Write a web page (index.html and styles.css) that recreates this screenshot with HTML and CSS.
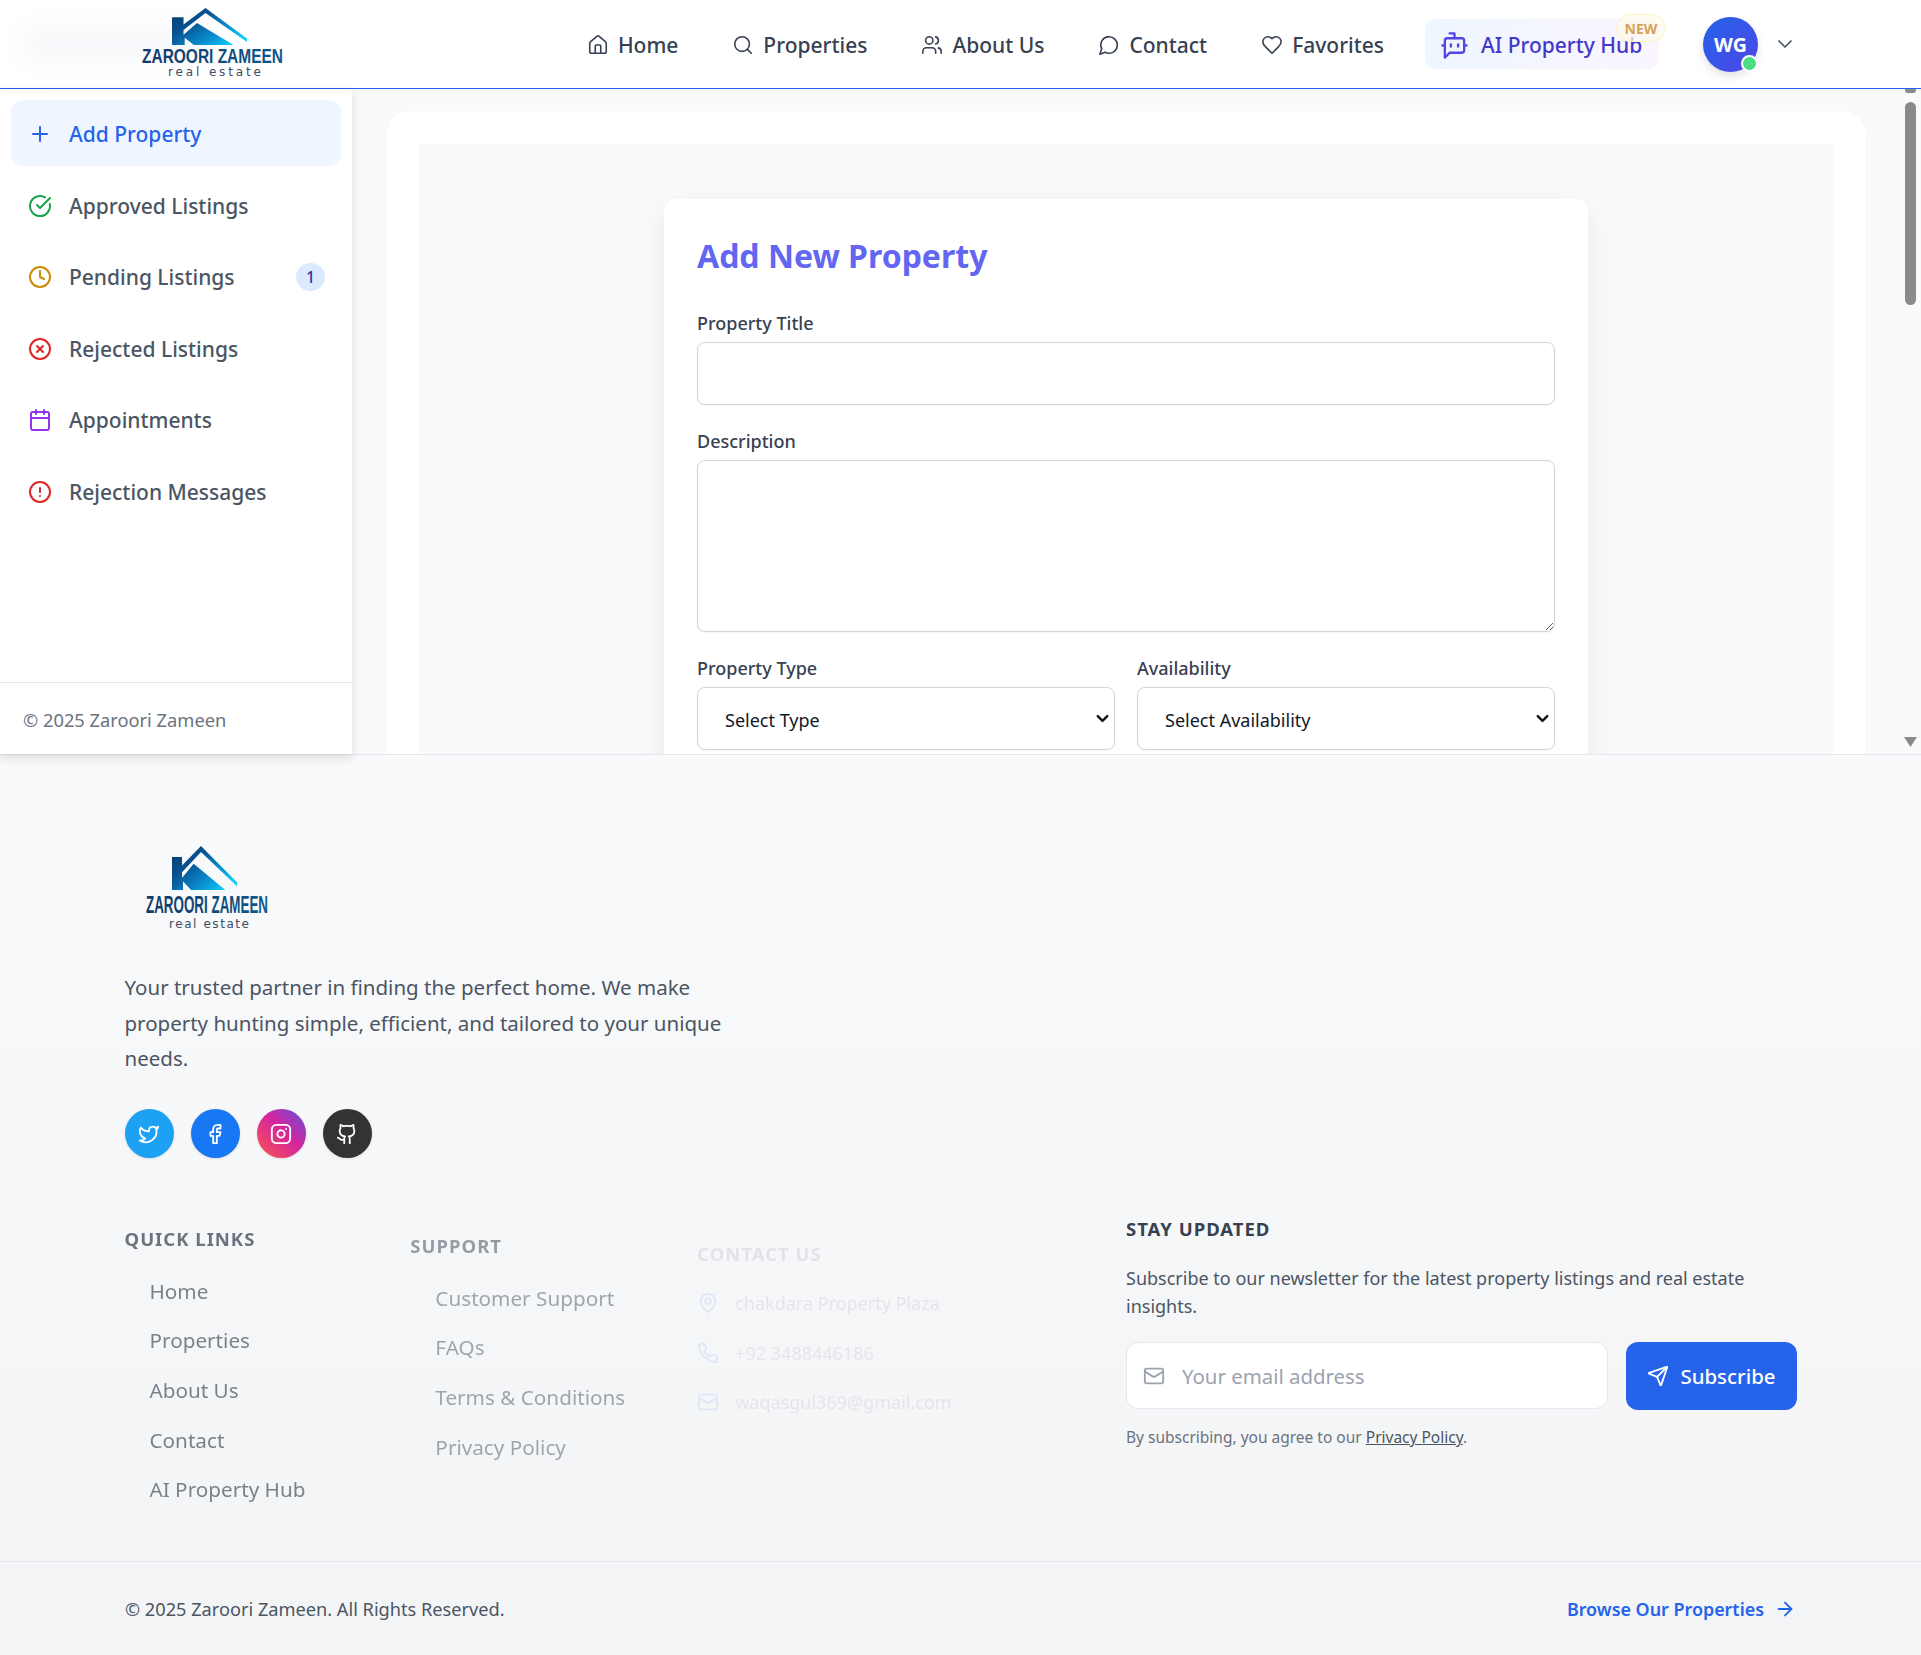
FILE: index.html
```html
<!DOCTYPE html>
<html lang="en">
<head>
<meta charset="utf-8">
<title>Add New Property - Zaroori Zameen</title>
<link rel="stylesheet" href="styles.css">
</head>
<body>
<svg class="sprite" aria-hidden="true">
  <defs>
    <linearGradient id="logoGrad" x1="0" y1="0" x2="1" y2="0.75">
      <stop offset="0" stop-color="#0a3768"/>
      <stop offset="0.35" stop-color="#07508f"/>
      <stop offset="0.72" stop-color="#0a8fd0"/>
      <stop offset="1" stop-color="#12d0fa"/>
    </linearGradient>
    <linearGradient id="logoText" x1="0" y1="0" x2="1" y2="0">
      <stop offset="0" stop-color="#123a68"/>
      <stop offset="1" stop-color="#0d5a8c"/>
    </linearGradient>
  </defs>
  <symbol id="i-logo-mark" viewBox="0 0 195 131" preserveAspectRatio="none">
    <path fill="url(#logoGrad)" d="M0 33H30V58L87 0L195 108V120L87 18L30 78V95L65 53L160 131H57L33 105V131H0Z"/>
  </symbol>
  <symbol id="i-home" viewBox="0 0 24 24"><path d="M15 21v-8a1 1 0 0 0-1-1h-4a1 1 0 0 0-1 1v8"/><path d="M3 10a2 2 0 0 1 .709-1.528l7-5.999a2 2 0 0 1 2.582 0l7 5.999A2 2 0 0 1 21 10v9a2 2 0 0 1-2 2H5a2 2 0 0 1-2-2z"/></symbol>
  <symbol id="i-search" viewBox="0 0 24 24"><circle cx="11" cy="11" r="8"/><path d="m21 21-4.3-4.3"/></symbol>
  <symbol id="i-users" viewBox="0 0 24 24"><path d="M16 21v-2a4 4 0 0 0-4-4H6a4 4 0 0 0-4 4v2"/><circle cx="9" cy="7" r="4"/><path d="M22 21v-2a4 4 0 0 0-3-3.87"/><path d="M16 3.13a4 4 0 0 1 0 7.75"/></symbol>
  <symbol id="i-message" viewBox="0 0 24 24"><path d="M7.9 20A9 9 0 1 0 4 16.1L2 22Z"/></symbol>
  <symbol id="i-heart" viewBox="0 0 24 24"><path d="M19 14c1.49-1.46 3-3.21 3-5.5A5.5 5.5 0 0 0 16.5 3c-1.76 0-3 .5-4.5 2-1.5-1.5-2.74-2-4.5-2A5.5 5.5 0 0 0 2 8.5c0 2.3 1.5 4.05 3 5.5l7 7Z"/></symbol>
  <symbol id="i-bot" viewBox="0 0 24 24"><path d="M12 6V2H8"/><path d="m8 18-4 4V8a2 2 0 0 1 2-2h12a2 2 0 0 1 2 2v8a2 2 0 0 1-2 2Z"/><path d="M2 12h2"/><path d="M9 11v2"/><path d="M15 11v2"/><path d="M20 12h2"/></symbol>
  <symbol id="i-chevron" viewBox="0 0 24 24"><path d="m6 9 6 6 6-6"/></symbol>
  <symbol id="i-plus" viewBox="0 0 24 24"><path d="M5 12h14"/><path d="M12 5v14"/></symbol>
  <symbol id="i-check" viewBox="0 0 24 24"><path d="M21.801 10A10 10 0 1 1 17 3.335"/><path d="m9 11 3 3L22 4"/></symbol>
  <symbol id="i-clock" viewBox="0 0 24 24"><circle cx="12" cy="12" r="10"/><path d="M12 6v6l4 2"/></symbol>
  <symbol id="i-xcircle" viewBox="0 0 24 24"><circle cx="12" cy="12" r="10"/><path d="m15 9-6 6"/><path d="m9 9 6 6"/></symbol>
  <symbol id="i-calendar" viewBox="0 0 24 24"><path d="M8 2v4"/><path d="M16 2v4"/><rect x="3" y="4" width="18" height="18" rx="2"/><path d="M3 10h18"/></symbol>
  <symbol id="i-alert" viewBox="0 0 24 24"><circle cx="12" cy="12" r="10"/><path d="M12 8v4"/><path d="M12 16h.01"/></symbol>
  <symbol id="i-twitter" viewBox="0 0 24 24"><path d="M22 4s-.7 2.1-2 3.4c1.6 10-9.4 17.3-18 11.6 2.2.1 4.4-.6 6-2C3 15.5.5 9.6 3 5c2.2 2.6 5.6 4.1 9 4-.9-4.2 4-6.6 7-3.8 1.1 0 3-1.2 3-1.2z"/></symbol>
  <symbol id="i-facebook" viewBox="0 0 24 24"><path d="M18 2h-3a5 5 0 0 0-5 5v3H7v4h3v8h4v-8h3l1-4h-4V7a1 1 0 0 1 1-1h3z"/></symbol>
  <symbol id="i-instagram" viewBox="0 0 24 24"><rect x="2" y="2" width="20" height="20" rx="5"/><path d="M16 11.37A4 4 0 1 1 12.63 8 4 4 0 0 1 16 11.37z"/><path d="M17.5 6.5h.01"/></symbol>
  <symbol id="i-github" viewBox="0 0 24 24"><path d="M15 22v-4a4.8 4.8 0 0 0-1-3.5c3 0 6-2 6-5.5.08-1.25-.27-2.48-1-3.5.28-1.15.28-2.35 0-3.5 0 0-1 0-3 1.5-2.64-.5-5.36-.5-8 0C6 2 5 2 5 2c-.3 1.15-.3 2.35 0 3.5A5.403 5.403 0 0 0 4 9c0 3.5 3 5.5 6 5.5-.39.49-.68 1.05-.85 1.65-.17.6-.22 1.23-.15 1.85v4"/><path d="M9 18c-4.51 2-5-2-7-2"/></symbol>
  <symbol id="i-pin" viewBox="0 0 24 24"><path d="M20 10c0 6-8 12-8 12s-8-6-8-12a8 8 0 0 1 16 0Z"/><circle cx="12" cy="10" r="3"/></symbol>
  <symbol id="i-phone" viewBox="0 0 24 24"><path d="M22 16.92v3a2 2 0 0 1-2.18 2 19.79 19.79 0 0 1-8.63-3.07 19.5 19.5 0 0 1-6-6 19.79 19.79 0 0 1-3.07-8.67A2 2 0 0 1 4.11 2h3a2 2 0 0 1 2 1.72 12.84 12.84 0 0 0 .7 2.81 2 2 0 0 1-.45 2.11L8.09 9.91a16 16 0 0 0 6 6l1.27-1.27a2 2 0 0 1 2.11-.45 12.84 12.84 0 0 0 2.81.7A2 2 0 0 1 22 16.92z"/></symbol>
  <symbol id="i-mail" viewBox="0 0 24 24"><rect x="2" y="4" width="20" height="16" rx="2"/><path d="m22 7-8.97 5.7a1.94 1.94 0 0 1-2.06 0L2 7"/></symbol>
  <symbol id="i-send" viewBox="0 0 24 24"><path d="M14.536 21.686a.5.5 0 0 0 .937-.024l6.5-19a.496.496 0 0 0-.635-.635l-19 6.5a.5.5 0 0 0-.024.937l7.93 3.18a2 2 0 0 1 1.112 1.11z"/><path d="m21.854 2.147-10.94 10.939"/></symbol>
  <symbol id="i-arrow" viewBox="0 0 24 24"><path d="M5 12h14"/><path d="m12 5 7 7-7 7"/></symbol>
</svg>

<header class="topbar">
  <a class="brand" href="#">
    <svg class="brand-mark"><use href="#i-logo-mark"/></svg>
    <svg class="brand-text" viewBox="0 0 142 30"><text class="logo-name" x="0" y="15" textLength="141" lengthAdjust="spacingAndGlyphs">ZAROORI ZAMEEN</text><text class="logo-sub" x="26" y="28" textLength="93" lengthAdjust="spacing">real estate</text></svg>
  </a>
  <nav class="nav">
    <a class="nav-link" href="#"><svg class="icon icon-nav"><use href="#i-home"/></svg>Home</a>
    <a class="nav-link" href="#"><svg class="icon icon-nav"><use href="#i-search"/></svg>Properties</a>
    <a class="nav-link" href="#"><svg class="icon icon-nav"><use href="#i-users"/></svg>About Us</a>
    <a class="nav-link" href="#"><svg class="icon icon-nav"><use href="#i-message"/></svg>Contact</a>
    <a class="nav-link" href="#"><svg class="icon icon-nav"><use href="#i-heart"/></svg>Favorites</a>
    <a class="hub" href="#"><svg class="icon icon-hub"><use href="#i-bot"/></svg><span class="hub-text">AI Property Hub</span><span class="hub-new">NEW</span></a>
    <div class="account">
      <div class="avatar">WG<span class="avatar-dot"></span></div>
      <svg class="icon icon-chevron"><use href="#i-chevron"/></svg>
    </div>
  </nav>
</header>

<div class="workspace">
  <aside class="sidebar">
    <ul class="side-list">
      <li><a class="side-item active" href="#"><svg class="icon icon-side"><use href="#i-plus"/></svg>Add Property</a></li>
      <li><a class="side-item" href="#"><svg class="icon icon-side green"><use href="#i-check"/></svg>Approved Listings</a></li>
      <li><a class="side-item" href="#"><svg class="icon icon-side amber"><use href="#i-clock"/></svg>Pending Listings<span class="side-badge">1</span></a></li>
      <li><a class="side-item" href="#"><svg class="icon icon-side red"><use href="#i-xcircle"/></svg>Rejected Listings</a></li>
      <li><a class="side-item" href="#"><svg class="icon icon-side purple"><use href="#i-calendar"/></svg>Appointments</a></li>
      <li><a class="side-item" href="#"><svg class="icon icon-side red"><use href="#i-alert"/></svg>Rejection Messages</a></li>
    </ul>
    <div class="side-foot">© 2025 Zaroori Zameen</div>
  </aside>
  <main class="main">
    <div class="panel">
      <div class="panel-inner">
        <form class="form-card">
          <h1 class="form-title">Add New Property</h1>
          <div class="field">
            <label class="label" for="title">Property Title</label>
            <input class="control" id="title" type="text">
          </div>
          <div class="field">
            <label class="label" for="desc">Description</label>
            <textarea class="control area" id="desc"></textarea>
          </div>
          <div class="field-row">
            <div class="field">
              <label class="label" for="type">Property Type</label>
              <div class="select-wrap">
                <select class="control select" id="type"><option>Select Type</option></select>
                <svg class="icon icon-select"><use href="#i-chevron"/></svg>
              </div>
            </div>
            <div class="field">
              <label class="label" for="avail">Availability</label>
              <div class="select-wrap">
                <select class="control select" id="avail"><option>Select Availability</option></select>
                <svg class="icon icon-select"><use href="#i-chevron"/></svg>
              </div>
            </div>
          </div>
        </form>
      </div>
    </div>
    <div class="scrollbar">
      <span class="scroll-up"></span>
      <span class="scroll-thumb"></span>
      <span class="scroll-down"></span>
    </div>
  </main>
</div>

<footer class="footer">
  <div class="foot-inner">
    <div class="foot-about">
      <div class="foot-logo">
        <svg class="foot-mark"><use href="#i-logo-mark"/></svg>
        <svg class="foot-text" viewBox="0 0 122 34"><text class="logo-name foot-name" x="0" y="18" textLength="122" lengthAdjust="spacingAndGlyphs">ZAROORI ZAMEEN</text><text class="logo-sub" x="23" y="33" textLength="80" lengthAdjust="spacing">real estate</text></svg>
      </div>
      <p class="foot-desc">Your trusted partner in finding the perfect home. We make property hunting simple, efficient, and tailored to your unique needs.</p>
      <div class="socials">
        <a class="social tw" href="#"><svg class="icon icon-social"><use href="#i-twitter"/></svg></a>
        <a class="social fb" href="#"><svg class="icon icon-social"><use href="#i-facebook"/></svg></a>
        <a class="social ig" href="#"><svg class="icon icon-social"><use href="#i-instagram"/></svg></a>
        <a class="social gh" href="#"><svg class="icon icon-social"><use href="#i-github"/></svg></a>
      </div>
    </div>
    <div class="foot-cols">
      <section class="col col-links">
        <h3 class="col-title">Quick Links</h3>
        <ul class="link-list">
          <li><a href="#">Home</a></li>
          <li><a href="#">Properties</a></li>
          <li><a href="#">About Us</a></li>
          <li><a href="#">Contact</a></li>
          <li><a href="#">AI Property Hub</a></li>
        </ul>
      </section>
      <section class="col col-support">
        <h3 class="col-title">Support</h3>
        <ul class="link-list">
          <li><a href="#">Customer Support</a></li>
          <li><a href="#">FAQs</a></li>
          <li><a href="#">Terms &amp; Conditions</a></li>
          <li><a href="#">Privacy Policy</a></li>
        </ul>
      </section>
      <section class="col col-contact">
        <h3 class="col-title">Contact Us</h3>
        <ul class="contact-list">
          <li><svg class="icon icon-contact"><use href="#i-pin"/></svg>chakdara Property Plaza</li>
          <li><svg class="icon icon-contact"><use href="#i-phone"/></svg>+92 3488446186</li>
          <li><svg class="icon icon-contact"><use href="#i-mail"/></svg>waqasgul369@gmail.com</li>
        </ul>
      </section>
      <section class="col col-news">
        <h3 class="col-title">Stay Updated</h3>
        <p class="news-text">Subscribe to our newsletter for the latest property listings and real estate insights.</p>
        <div class="news-form">
          <label class="news-input"><svg class="icon icon-mail"><use href="#i-mail"/></svg><input class="news-field" type="email" placeholder="Your email address"></label>
          <button class="news-btn" type="button"><svg class="icon icon-send"><use href="#i-send"/></svg>Subscribe</button>
        </div>
        <p class="news-note">By subscribing, you agree to our <a href="#">Privacy Policy</a>.</p>
      </section>
    </div>
  </div>
  <div class="foot-bottom">
    <span>© 2025 Zaroori Zameen. All Rights Reserved.</span>
    <a class="browse" href="#">Browse Our Properties<svg class="icon icon-arrow"><use href="#i-arrow"/></svg></a>
  </div>
</footer>
</body>
</html>
```

FILE: styles.css
```css
* { box-sizing: border-box; }
html, body { margin: 0; padding: 0; }
body {
  width: 1921px;
  height: 1655px;
  overflow: hidden;
  font-family: "Noto Sans", "Open Sans", Arial, sans-serif;
  color: #374151;
  background: #f9fafb;
}
a { color: inherit; text-decoration: none; }
ul { list-style: none; margin: 0; padding: 0; }
.sprite { position: absolute; width: 0; height: 0; }
.icon {
  flex: none;
  fill: none;
  stroke: currentColor;
  stroke-width: 2;
  stroke-linecap: round;
  stroke-linejoin: round;
}

/* Top bar */
.topbar {
  height: 89px;
  background: #fff;
  border-bottom: 1px solid #2563eb;
  display: flex;
  align-items: flex-start;
  justify-content: space-between;
  padding: 0 124px 0 142px;
  position: relative;
}
.topbar::before {
  content: "";
  position: absolute;
  left: 24px;
  top: 30px;
  width: 180px;
  height: 28px;
  background: #eef0f6;
  filter: blur(14px);
  opacity: .6;
}
.brand { width: 142px; height: 88px; position: relative; display: block; }
.brand-mark { position: absolute; left: 30px; top: 8px; width: 75px; height: 37px; }
.brand-text { position: absolute; left: 0; top: 48px; width: 142px; height: 30px; overflow: visible; }
.logo-name {
  font-family: "Liberation Sans", Arial, sans-serif;
  font-weight: 700;
  font-size: 19.5px;
  fill: url(#logoText);
}
.foot-name { font-size: 23.7px; }
.logo-sub {
  font-family: "DejaVu Sans", sans-serif;
  font-size: 12px;
  fill: #3f4d63;
}
.nav { display: flex; align-items: center; height: 88px; }
.nav-link {
  display: flex;
  align-items: center;
  gap: 9px;
  margin-right: 54px;
  padding-top: 2px;
  font-size: 21px;
  font-weight: 500;
  color: #374151;
}
.icon-nav { width: 22px; height: 22px; stroke-width: 1.75; }
.hub {
  position: relative;
  width: 234px;
  height: 50px;
  margin-left: -13px;
  margin-right: 44px;
  padding: 2px 0 0 15px;
  display: flex;
  align-items: center;
  gap: 12px;
  border-radius: 10px;
  background: linear-gradient(90deg, #eff6ff, #faf5ff);
  font-size: 21px;
  font-weight: 500;
}
.hub-text { color: #4338ca; }
.icon-hub { width: 29px; height: 29px; color: #4f46e5; stroke-width: 1.9; }
.hub-new {
  position: absolute;
  right: -7px;
  top: -5px;
  width: 50px;
  height: 28px;
  border-radius: 14px;
  border: 1px solid #fef3c7;
  background: rgba(254, 249, 235, .75);
  color: #d6a15a;
  font-size: 14px;
  font-weight: 700;
  display: flex;
  align-items: center;
  justify-content: center;
}
.account { display: flex; align-items: center; gap: 15px; }
.avatar {
  position: relative;
  width: 55px;
  height: 55px;
  border-radius: 50%;
  background: linear-gradient(135deg, #2563eb, #4f46e5);
  color: #fff;
  font-size: 19.5px;
  font-weight: 700;
  display: flex;
  align-items: center;
  justify-content: center;
  box-shadow: 0 4px 8px rgba(0, 0, 0, .12);
}
.avatar-dot {
  position: absolute;
  right: 0;
  bottom: 0;
  width: 17px;
  height: 17px;
  border-radius: 50%;
  background: #4ade80;
  border: 2px solid #fff;
}
.icon-chevron { width: 24px; height: 24px; color: #4b5563; stroke-width: 1.75; }

/* Workspace */
.workspace { display: flex; height: 665px; }
.sidebar {
  width: 352px;
  flex: none;
  height: 665px;
  background: #fff;
  display: flex;
  flex-direction: column;
  justify-content: space-between;
  box-shadow: 0 4px 10px rgba(0, 0, 0, .12);
  position: relative;
  z-index: 1;
  padding-top: 11px;
}
.side-list { display: flex; flex-direction: column; gap: 5.5px; padding: 0 11px; }
.side-item {
  height: 66px;
  display: flex;
  align-items: center;
  gap: 17px;
  padding: 2px 16px 0 17px;
  border-radius: 12px;
  font-size: 21px;
  font-weight: 500;
  color: #4b5563;
}
.side-item.active { background: #eff6ff; color: #2563eb; }
.icon-side { width: 24px; height: 24px; }
.green { color: #16a34a; }
.amber { color: #ca8a04; }
.red { color: #dc2626; }
.purple { color: #9333ea; }
.side-badge {
  margin-left: auto;
  width: 29px;
  height: 28px;
  border-radius: 50%;
  background: #dbeafe;
  color: #3730a3;
  font-size: 16px;
  display: flex;
  align-items: center;
  justify-content: center;
}
.side-foot {
  height: 72px;
  border-top: 1px solid #e5e7eb;
  padding: 2px 23px 0;
  display: flex;
  align-items: center;
  font-size: 18.3px;
  color: #6b7280;
}
.main { flex: 1; display: flex; min-width: 0; height: 665px; background: #f9fafb; position: relative; overflow: hidden; }
.panel {
  width: 1480px;
  margin: 22px 0 0 34px;
  padding: 33px 33px 0;
  background: #fff;
  border-radius: 24px 24px 0 0;
  box-shadow: 0 1px 3px rgba(0, 0, 0, .04);
  height: 700px;
}
.panel-inner { background: #f9fafb; padding: 55px 245px 0; height: 100%; }
.form-card {
  background: #fff;
  border-radius: 12px;
  box-shadow: 0 10px 30px rgba(0, 0, 0, .08);
  padding: 33px 33px 60px;
  width: 924px;
}
.form-title { margin: 0 0 29px; font-size: 32px; font-weight: 700; line-height: 48px; color: #6366f1; }
.field { margin-bottom: 22px; display: flex; flex-direction: column; flex: 1; min-width: 0; }
.label { font-size: 18px; font-weight: 500; color: #374151; line-height: 28px; margin-bottom: 5px; }
.control {
  width: 100%;
  height: 63px;
  border: 1px solid #d1d5db;
  border-radius: 8px;
  background: #fff;
  font-family: inherit;
  font-size: 18px;
  color: #111827;
  box-shadow: 0 1px 2px rgba(0, 0, 0, .04);
}
.area { height: 172px; display: block; resize: vertical; }
.select-wrap { position: relative; }
.select { appearance: none; -webkit-appearance: none; padding: 2px 0 0 27px; display: block; }
.icon-select {
  position: absolute;
  right: 3px;
  top: 22px;
  width: 19px;
  height: 19px;
  color: #111;
  stroke-width: 3;
  pointer-events: none;
}
.field-row { display: flex; gap: 22px; }

.scrollbar {
  position: absolute;
  right: 5px;
  top: 0;
  width: 11px;
  height: 100%;
}
.scroll-up {
  position: absolute;
  left: 0;
  top: -1px;
  width: 11px;
  height: 5px;
  background: #8a8a8a;
  border-radius: 0 0 3px 3px;
}
.scroll-thumb {
  position: absolute;
  left: 0;
  top: 13px;
  width: 11px;
  height: 203px;
  background: #8a8a8a;
  border-radius: 6px;
}
.scroll-down {
  position: absolute;
  left: -1px;
  top: 648px;
  width: 13px;
  height: 10px;
  background: #8a8a8a;
  clip-path: polygon(0 0, 100% 0, 50% 100%);
}

/* Footer */
.footer {
  height: 901px;
  border-top: 1px solid #e5e7eb;
  background: linear-gradient(180deg, #f9fafb, #f3f4f6);
  display: flex;
  flex-direction: column;
}
.foot-inner { height: 806px; padding: 91px 124px 0 124.5px; flex: none; }
.foot-about { width: 620px; }
.foot-logo { position: relative; width: 200px; height: 87px; margin-left: 21px; }
.foot-mark { position: absolute; left: 26px; top: 0; width: 65px; height: 44px; }
.foot-text { position: absolute; left: 0; top: 49px; width: 122px; height: 34px; overflow: visible; }
.foot-desc { margin: 37px 0 0; font-size: 20.5px; line-height: 35.6px; color: #4b5563; }
.socials { display: flex; gap: 16.5px; margin-top: 32px; }
.social {
  width: 49.5px;
  height: 49.5px;
  border-radius: 50%;
  display: flex;
  align-items: center;
  justify-content: center;
  color: #fff;
  box-shadow: 0 1px 3px rgba(0, 0, 0, .1);
}
.icon-social { width: 22px; height: 22px; }
.tw { background: #1da1f2; }
.fb { background: #1877f2; }
.ig { background: linear-gradient(45deg, #f9584a, #d6249f 55%, #5b51d8); }
.gh { background: #333; }
.foot-cols { display: flex; margin-top: 46px; }
.col-title {
  margin: 0;
  font-size: 18.5px;
  font-weight: 700;
  letter-spacing: 1px;
  text-transform: uppercase;
  line-height: 28px;
  color: #374151;
}
.col-links { width: 286px; opacity: .72; padding-top: 21px; }
.col-support { width: 287px; opacity: .5; padding-top: 28px; }
.col-contact { width: 429px; opacity: .1; padding-top: 36px; }
.col-news { flex: 1; padding-top: 11px; }
.link-list { margin-top: 22.5px; padding-left: 25px; display: flex; flex-direction: column; gap: 19.6px; }
.link-list a { font-size: 20.7px; line-height: 30px; color: #4b5563; display: block; }
.contact-list { margin-top: 20px; display: flex; flex-direction: column; gap: 19.5px; }
.contact-list li { display: flex; align-items: center; gap: 16px; font-size: 18px; line-height: 30px; color: #4b5563; }
.icon-contact { width: 22px; height: 22px; color: #2563eb; }
.news-text { margin: 21px 0 0; font-size: 18px; line-height: 28px; color: #4b5563; }
.news-form { display: flex; gap: 18px; margin-top: 22px; }
.news-input {
  width: 482px;
  height: 67px;
  background: #fff;
  border: 1px solid #e5e7eb;
  border-radius: 12px;
  display: flex;
  align-items: center;
  gap: 15px;
  padding-left: 16px;
}
.icon-mail { width: 22px; height: 22px; color: #9ca3af; }
.news-field {
  flex: 1;
  min-width: 0;
  border: 0;
  outline: 0;
  background: transparent;
  font-family: inherit;
  font-size: 20.4px;
  color: #374151;
}
.news-field::placeholder { color: #9ca3af; }
.news-btn {
  width: 171px;
  height: 68px;
  border: 0;
  border-radius: 12px;
  background: #2563eb;
  color: #fff;
  font-family: inherit;
  font-size: 20.4px;
  font-weight: 500;
  display: flex;
  align-items: center;
  justify-content: center;
  gap: 11px;
}
.icon-send { width: 22px; height: 22px; }
.news-note { margin: 15px 0 0; font-size: 15.5px; line-height: 24px; color: #6b7280; }
.news-note a { text-decoration: underline; color: #4b5563; }
.foot-bottom {
  flex: 1;
  border-top: 1px solid #e5e7eb;
  padding: 0 125px;
  display: flex;
  align-items: center;
  justify-content: space-between;
  font-size: 18.2px;
  color: #4b5563;
}
.browse { display: flex; align-items: center; gap: 10px; color: #2563eb; font-weight: 600; font-size: 17.9px; }
.icon-arrow { width: 22px; height: 22px; }
```
